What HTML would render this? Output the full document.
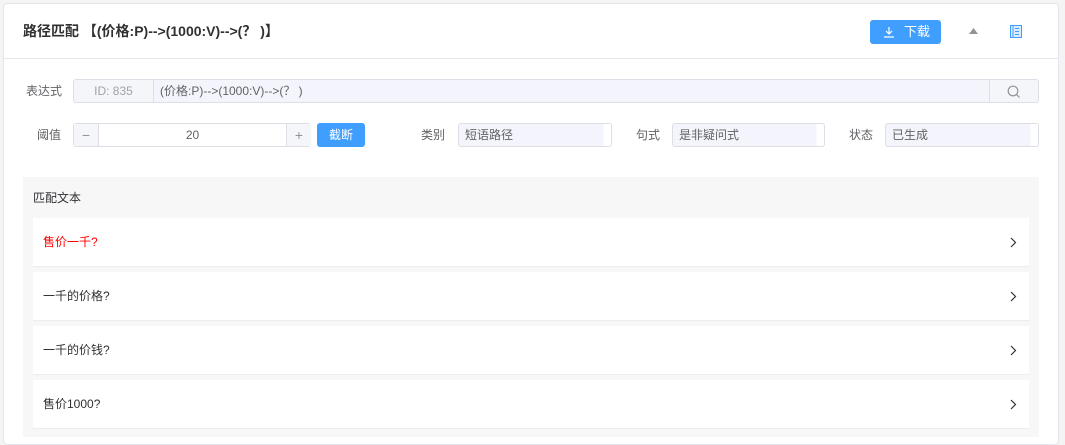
<!DOCTYPE html><html><head><meta charset="utf-8"><style>
body{margin:0;width:1065px;height:432px;background:#f4f4f5;font-family:"Liberation Sans","Noto Sans CJK SC",sans-serif;font-size:12px;color:#606266;overflow:hidden;position:relative}
.card{position:absolute;left:3px;top:3px;width:1054px;height:440px;background:#fff;border:1px solid #e4e6ee;border-radius:4px}
.a{position:absolute}
.hdr{left:0;top:0;width:1054px;height:54px;border-bottom:1px solid #e4e6ee}
.box{position:absolute;border:1px solid #dcdfe6;border-radius:3px;box-sizing:border-box;height:24px;line-height:22px}
.inp{background:#f4f5fd;}
.lbl{position:absolute;line-height:24px;font-size:12px;color:#606266}
.item{position:absolute;left:33px;width:996px;height:48px;background:#fff;border-bottom:1px solid #ebedf3;line-height:48px;font-size:12px;color:#303133}
.item span{position:absolute;left:10px}
.item svg{position:absolute;right:12px;top:19px}
</style></head><body>
<div class="card">
<div class="a hdr"></div>
<div class="a" style="left:19px;top:17px;font-size:14px;font-weight:bold;color:#303133;line-height:20px">路径匹配 【(价格:P)--&gt;(1000:V)--&gt;(？ )】</div>
<div class="a" style="left:866px;top:16px;width:71px;height:24px;background:#409eff;border-radius:3px;color:#fff;font-size:13px;line-height:24px">
<svg class="a" style="left:13px;top:6px" width="12" height="12" viewBox="0 0 12 12"><path d="M6 1v7M3 5l3 3 3-3M1 11h10" stroke="#fff" stroke-width="1.2" fill="none"/></svg>
<span class="a" style="left:34px">下载</span></div>
<svg class="a" style="left:965px;top:24px" width="9" height="6"><path d="M0 6L4.5 0 9 6z" fill="#909399"/></svg>
<svg class="a" style="left:1006px;top:21px" width="12" height="13"><rect x="0.5" y="0.5" width="11" height="12" fill="#d9ecff" stroke="#409eff"/><path d="M3 1v11M5 3.5h4M5 6.5h4M5 9.5h4" stroke="#409eff"/></svg>
</div>
<div class="lbl" style="left:26px;top:79px">表达式</div>
<div class="box" style="left:73px;top:79px;width:966px;background:#f5f6fa"></div>
<div class="a" style="left:74px;top:80px;width:79px;height:22px;line-height:22px;text-align:center;color:#a0a3aa">ID: 835</div>
<div class="a" style="left:153px;top:80px;width:835px;height:22px;background:#f4f4fc;border-left:1px solid #dcdfe6;border-right:1px solid #dcdfe6;line-height:22px;text-indent:6px;color:#606266">(价格:P)--&gt;(1000:V)--&gt;(？ )</div>
<svg class="a" style="left:1007px;top:85px" width="14" height="14"><circle cx="6" cy="6" r="4.8" fill="none" stroke="#909399" stroke-width="1.2"/><path d="M9.5 9.5l3 3" stroke="#909399" stroke-width="1.2"/></svg>
<div class="lbl" style="left:37px;top:123px">阈值</div>
<div class="box" style="left:73px;top:123px;width:238px;background:#fff"></div>
<div class="a" style="left:74px;top:124px;width:24px;height:22px;background:#f5f6fa;border-right:1px solid #dcdfe6;text-align:center;line-height:22px;color:#909399;font-size:14px">−</div>
<div class="a" style="left:286px;top:124px;width:24px;height:22px;background:#f5f6fa;border-left:1px solid #dcdfe6;text-align:center;line-height:22px;color:#909399;font-size:14px">+</div>
<div class="a" style="left:99px;top:124px;width:187px;text-align:center;line-height:22px">20</div>
<div class="a" style="left:317px;top:123px;width:48px;height:24px;background:#409eff;border-radius:3px;color:#fff;text-align:center;line-height:24px">截断</div>
<div class="lbl" style="left:421px;top:123px">类别</div>
<div class="box" style="left:458px;top:123px;width:154px;background:linear-gradient(90deg,#f4f4fc 95%,#fff 95%);padding-left:6px">短语路径</div>
<div class="lbl" style="left:636px;top:123px">句式</div>
<div class="box" style="left:672px;top:123px;width:153px;background:linear-gradient(90deg,#f4f4fc 95%,#fff 95%);padding-left:6px">是非疑问式</div>
<div class="lbl" style="left:849px;top:123px">状态</div>
<div class="box" style="left:885px;top:123px;width:154px;background:linear-gradient(90deg,#f4f4fc 95%,#fff 95%);padding-left:6px">已生成</div>
<div class="a" style="left:23px;top:177px;width:1016px;height:260px;background:#f7f7f8"></div>
<div class="a" style="left:33px;top:189px;color:#303133;line-height:18px">匹配文本</div>
<div class="item" style="top:218px"><span style="color:#f00">售价一千?</span><svg width="7" height="11"><path d="M1 1l4.5 4.5L1 10" stroke="#303133" fill="none" stroke-width="1.2"/></svg></div>
<div class="item" style="top:272px"><span>一千的价格?</span><svg width="7" height="11"><path d="M1 1l4.5 4.5L1 10" stroke="#303133" fill="none" stroke-width="1.2"/></svg></div>
<div class="item" style="top:326px"><span>一千的价钱?</span><svg width="7" height="11"><path d="M1 1l4.5 4.5L1 10" stroke="#303133" fill="none" stroke-width="1.2"/></svg></div>
<div class="item" style="top:380px"><span>售价1000?</span><svg width="7" height="11"><path d="M1 1l4.5 4.5L1 10" stroke="#303133" fill="none" stroke-width="1.2"/></svg></div>
</body></html>
